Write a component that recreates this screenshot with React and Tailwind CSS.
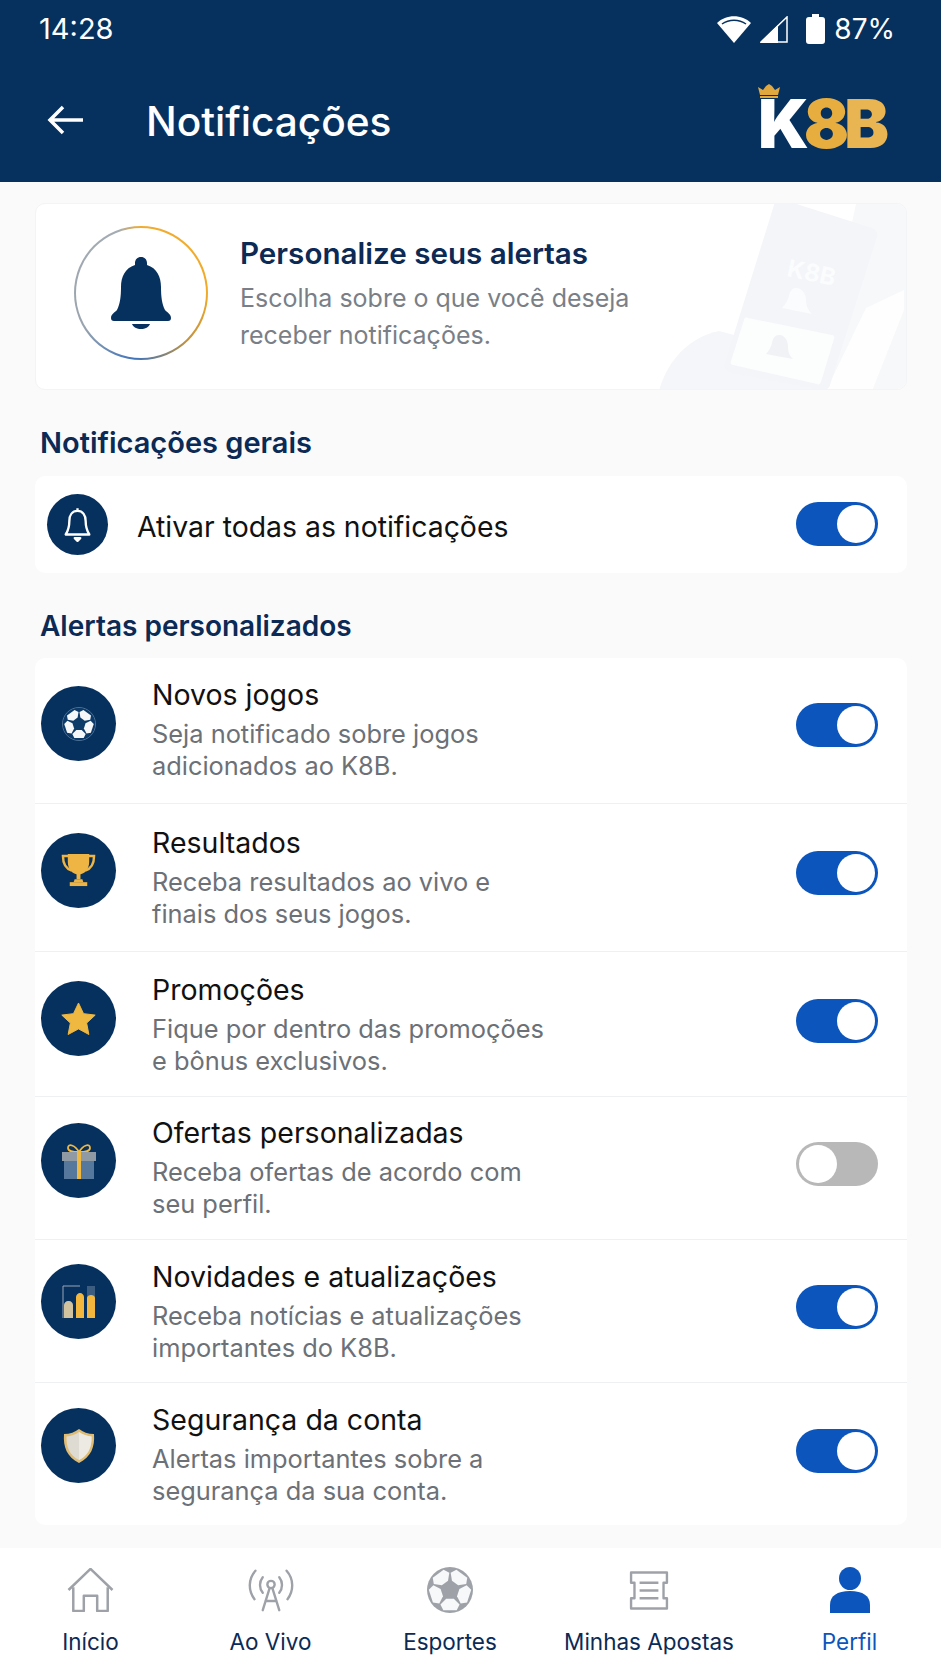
import { useState } from "react";

function Bell({ className, fill = "#06315f" }) {
  return (
    <svg viewBox="0 0 60 72" className={className}>
      <path
        fill={fill}
        d="M30 0c-3.600 0-6 2.600-6 6v2C14 11 10 20 10 30c0 10-1 17-4 23-1.500 2-6 4-6 8 0 2 1 3 3 3h54c2 0 3-1 3-3 0-4-4.500-6-6-8-3-6-4-13-4-23 0-10-4-19-14-22V6c0-3.400-2.400-6-6-6z"
      />
      <path fill={fill} d="M21 67h18c-1 3-5 5-9 5s-8-2-9-5z" />
    </svg>
  );
}

function BellOutline() {
  return (
    <svg viewBox="0 0 32 40" className="w-[29px] h-[37px]" fill="none" stroke="#fff" strokeWidth="2.600" strokeLinejoin="round">
      <path d="M16 2v3M16 5C10 5 7 10 7 16c0 6-1 10-4 15h26c-3-5-4-9-4-15 0-6-3-11-9-11z" />
      <path d="M13 35h6l-3 3z" fill="#fff" />
    </svg>
  );
}

function Ball({ base, patch, className }) {
  const angles = [36, 108, 180, 252, 324];
  return (
    <svg viewBox="0 0 48 48" className={className}>
      <circle cx="24" cy="24" r="24" fill={base} />
      {angles.map((a) => (
        <polygon key={a} points="17,3 31,3 34,9 28,15 20,15 14,9" fill={patch} transform={`rotate(${a} 24 24)`} />
      ))}
    </svg>
  );
}

function SoccerIcon() {
  return (
    <div className="w-[34px] h-[34px] rounded-full border border-[#4d6f94] bg-[#0c3a69] overflow-hidden">
      <Ball base="#0c3a69" patch="#f6f7f9" className="w-full h-full" />
    </div>
  );
}

function Trophy() {
  return (
    <svg viewBox="0 0 36 36" className="w-[35px] h-[35px]">
      <path d="M8 3H2c0 8 3 13 9 15M28 3h6c0 8-3 13-9 15" fill="none" stroke="#eeb544" strokeWidth="2.500" />
      <path d="M7 1h22v8c0 8-5 13-11 13S7 17 7 9z" fill="#eeb544" />
      <path d="M16 21h4v6h-4z" fill="#eeb544" />
      <path d="M14 27h8l1 3H13z" fill="#eeb544" />
      <path d="M9 30h18v4H9z" fill="#eeb544" />
    </svg>
  );
}

function Star() {
  return (
    <svg viewBox="0 0 36 34" className="w-[35px] h-[33px]">
      <path
        d="M18 1l5.200 11 12 1.500-8.800 8.200 2.300 11.800L18 27.700 7.300 33.500l2.300-11.800L.8 13.500l12-1.500z"
        fill="#efb840"
        stroke="#efb840"
        strokeLinejoin="round"
      />
    </svg>
  );
}

function Gift() {
  return (
    <svg viewBox="0 0 34 36" className="w-[34px] h-[36px]">
      <path d="M17 9C13 2 6 0 6 5c0 4 6 4 11 4zM17 9c4-7 11-9 11-4 0 4-6 4-11 4z" fill="none" stroke="#efb840" strokeWidth="1.800" />
      <path d="M2 12h30v16H2z" fill="#5a7ba0" />
      <path d="M0 9h34v9H0z" fill="#8f9aa4" />
      <path d="M2 18h13v18H2zM19 18h13v18H19z" fill="#56789d" />
      <path d="M15 9h4v27h-4z" fill="#efb840" />
    </svg>
  );
}

function Chart() {
  return (
    <svg viewBox="0 0 34 34" className="w-[34px] h-[34px]">
      <path d="M1 33V1h17" fill="none" stroke="#9aa6b4" strokeWidth="1" />
      <path d="M25 1h8v12h-8z" fill="#3c5c80" />
      <path d="M2 33V20c0-2 2-4 4-4h1c2 0 4 2 4 4v13z" fill="#d2c3a0" />
      <path d="M14 33V12c0-2 2-4 4-4s4 2 4 4v21z" fill="#f3b73e" />
      <path d="M25 33V13c0-2 2-3 4-3s4 1 4 3v20z" fill="#f3b73e" />
    </svg>
  );
}

function Shield() {
  return (
    <svg viewBox="0 0 32 36" className="w-[32px] h-[36px]">
      <path d="M16 1c4 3 9 5 15 5 1 13-3 23-15 29C4 29 0 19 1 6c6 0 11-2 15-5z" fill="#e0bc72" />
      <path d="M16 4c3.500 2.500 8 4 12.500 4.500C29 19 25 28 16 32 7 28 3 19 3.500 8.500 8 8 12.500 6.500 16 4z" fill="#dedbd2" />
      <path d="M16 4c3.500 2.500 8 4 12.500 4.500C29 19 25 28 16 32z" fill="#eceae3" />
    </svg>
  );
}

function Circle({ size, children }) {
  return (
    <div className={`${size} rounded-full bg-[#06315f] flex items-center justify-center shrink-0`}>{children}</div>
  );
}

function Toggle({ initial = true }) {
  const [on, setOn] = useState(initial);
  return (
    <button
      onClick={() => setOn(!on)}
      className={`w-[82px] h-[44px] rounded-full p-[3px] flex shrink-0 ${on ? "bg-[#0b55bd] justify-end" : "bg-[#b8b8b8] justify-start"}`}
    >
      <span className="w-[38px] h-[38px] rounded-full bg-white block" />
    </button>
  );
}

const rows = [
  {
    title: "Novos jogos",
    desc: ["Seja notificado sobre jogos", "adicionados ao K8B."],
    icon: <SoccerIcon />,
    row: "h-[146px]",
    iconPos: "mt-[28px]",
    textPos: "mt-[19px]",
    togglePos: "mt-[45px]",
  },
  {
    title: "Resultados",
    desc: ["Receba resultados ao vivo e", "finais dos seus jogos."],
    icon: <Trophy />,
    row: "h-[148px]",
    iconPos: "mt-[29px]",
    textPos: "mt-[21px]",
    togglePos: "mt-[47px]",
  },
  {
    title: "Promoções",
    desc: ["Fique por dentro das promoções", "e bônus exclusivos."],
    icon: <Star />,
    row: "h-[145px]",
    iconPos: "mt-[29px]",
    textPos: "mt-[20px]",
    togglePos: "mt-[47px]",
  },
  {
    title: "Ofertas personalizadas",
    desc: ["Receba ofertas de acordo com", "seu perfil."],
    icon: <Gift />,
    off: true,
    row: "h-[143px]",
    iconPos: "mt-[26px]",
    textPos: "mt-[18px]",
    togglePos: "mt-[45px]",
  },
  {
    title: "Novidades e atualizações",
    desc: ["Receba notícias e atualizações", "importantes do K8B."],
    icon: <Chart />,
    row: "h-[143px]",
    iconPos: "mt-[24px]",
    textPos: "mt-[19px]",
    togglePos: "mt-[45px]",
  },
  {
    title: "Segurança da conta",
    desc: ["Alertas importantes sobre a", "segurança da sua conta."],
    icon: <Shield />,
    row: "h-[142px]",
    iconPos: "mt-[25px]",
    textPos: "mt-[19px]",
    togglePos: "mt-[46px]",
  },
];

function HeroArt() {
  return (
    <svg viewBox="0 0 280 187" className="absolute right-0 top-0 w-[280px] h-[187px]">
      <path d="M230 0h50v187h-90z" fill="#f7f8fa" />
      <path d="M33 187c8-30 30-54 60-60l60 16 60 44z" fill="#f5f6f9" />
      <path d="M240 104l38-18v20l-32 81h-46z" fill="#fefefe" />
      <path
        d="M158 -4l88 28c4 1 6 5 5 9l-47 148c-1 4-5 6-9 5l-90-17c-5-1-8-5-6-10L148 1c1-4 6-6 10-5z"
        fill="#f4f5f9"
      />
      <path d="M122 114l84 17c2 0 3 2 2 4l-13 43c-1 2-2 3-4 2l-84-19c-2 0-3-2-2-4l13-41c0-2 2-3 4-2z" fill="#fcfdfd" />
      <text x="160" y="72" fontSize="24" fontWeight="700" fill="#fbfcfd" transform="rotate(12 160 72)">
        K8B
      </text>
      <path d="M170 84c6 0 10 6 10 12 0 8 4 12 6 14l-30-6c3-3 6-8 7-12 1-5 3-8 7-8z" fill="#fbfcfd" />
      <path d="M153 131c6 0 9 6 9 12 0 7 3 10 5 12l-27-5c3-3 5-7 6-11 1-5 3-8 7-8z" fill="#f0f2f6" />
    </svg>
  );
}

function Home() {
  return (
    <svg viewBox="0 0 48 46" className="w-[47px] h-[44px]" fill="none" stroke="#9ea2a8" strokeWidth="2.600" strokeLinejoin="round">
      <path d="M1 23L24 1l23 22" />
      <path d="M6 20v25h11V29h14v16h11V20" />
    </svg>
  );
}

function Tower() {
  return (
    <svg viewBox="0 0 48 48" className="w-[48px] h-[44px]" fill="none" stroke="#9ea2a8" strokeWidth="2.600" strokeLinecap="round">
      <circle cx="24" cy="18" r="4" />
      <path d="M22.500 22L15 46M25.500 22L33 46M18 36h12" />
      <path d="M15 10c-4 5-4 12 0 17M33 10c4 5 4 12 0 17" />
      <path d="M7 3c-8 9-8 22-1 31M41 3c8 9 8 22 1 31" />
    </svg>
  );
}

function Scroll() {
  return (
    <svg viewBox="0 0 48 48" className="w-[42px] h-[41px]" fill="none" stroke="#9ea2a8" strokeWidth="2.800" strokeLinejoin="round">
      <path d="M3 3h42v12h-4v18h4v12H3V33h4V15H3z" />
      <path d="M13 15h22M13 24h22M13 33h22" />
    </svg>
  );
}

function Person() {
  return (
    <svg viewBox="0 0 40 46" className="w-[40px] h-[46px]" fill="#0b55bd">
      <ellipse cx="20" cy="11.500" rx="11" ry="11.500" />
      <path d="M0 46V38c0-9 7-14 20-14s20 5 20 14v8z" />
    </svg>
  );
}

const tabs = [
  { label: "Início", icon: <Home /> },
  { label: "Ao Vivo", icon: <Tower /> },
  { label: "Esportes", icon: <Ball base="#9ea2a8" patch="#f7f8f9" className="w-[46px] h-[46px]" /> },
  { label: "Minhas Apostas", icon: <Scroll /> },
  { label: "Perfil", icon: <Person />, active: true },
];

export default function App() {
  return (
    <div className="w-[941px] h-[1672px] bg-[#fafafb] flex flex-col overflow-hidden font-['Inter','Noto_Sans',sans-serif]">
      <header className="h-[182px] bg-[#06315f] text-white shrink-0">
        <div className="h-[58px] pl-[39px] pr-[46px] flex items-center justify-between">
          <span className="text-[29px]">14:28</span>
          <div className="flex items-center">
            <svg viewBox="0 0 34 27" className="w-[34px] h-[27px]">
              <path d="M17 27L0 7c9-9 25-9 34 0z" fill="#fff" />
              <path d="M5 8c7-5 17-5 24 0" fill="none" stroke="#06315f" strokeWidth="1.500" />
            </svg>
            <svg viewBox="0 0 28 27" className="w-[28px] h-[27px] ml-[9px]">
              <path d="M27 1v25H1z" fill="none" stroke="#fff" strokeWidth="1.500" />
              <path d="M18 9v18H0z" fill="#fff" />
            </svg>
            <svg viewBox="0 0 19 30" className="w-[19px] h-[30px] ml-[18px]">
              <path d="M6 0h7v3h3c2 0 3 1 3 3v21c0 2-1 3-3 3H3c-2 0-3-1-3-3V6c0-2 1-3 3-3h3z" fill="#fff" />
            </svg>
            <span className="text-[28px] ml-[9px]">87%</span>
          </div>
        </div>
        <div className="h-[124px] pl-[47px] pr-[57px] flex items-center">
          <svg viewBox="0 0 36 30" className="w-[36px] h-[30px] shrink-0" fill="none" stroke="#fff" strokeWidth="3.500">
            <path d="M36 15H3M16 2L3 15l13 13" />
          </svg>
          <h1 className="ml-[63px] text-[40.600px] font-medium leading-none mt-[4px]">Notificações</h1>
          <div className="ml-auto relative mt-[7px]">
            <svg viewBox="0 0 22 14" className="absolute left-0 -top-[15px] w-[22px] h-[14px]" fill="#e0a83f">
              <path d="M2 11L0 3l5 3 3-4 3-2 3 2 3 4 5-3-2 8z" />
              <path d="M2 12h18v2H2z" />
            </svg>
            <div className="text-[67px] leading-[50px] font-black tracking-[-5px] flex">
              <span className="text-white">K</span>
              <span className="text-[#e7ad3f]">8</span>
              <span className="text-[#e9b452]">B</span>
            </div>
          </div>
        </div>
      </header>

      <main className="flex-1 pt-[21px] pl-[35px] pr-[34px]">
        <section className="relative h-[187px] bg-white rounded-[10px] overflow-hidden border border-[#f3f4f5] flex items-center pl-[38px]">
          <HeroArt />
          <div className="w-[134px] h-[134px] mb-[7px] rounded-full p-[2px] bg-[conic-gradient(#f2ab2e_0deg,#f0ab2b_90deg,#c4933c_135deg,#3f74bb_185deg,#9aa4ae_240deg,#a5acb3_340deg,#f2ab2e_360deg)] shrink-0">
            <div className="w-full h-full rounded-full bg-white flex items-center justify-center">
              <Bell className="w-[60px] h-[72px]" />
            </div>
          </div>
          <div className="relative ml-[32px] -mt-[5px]">
            <h2 className="text-[29.600px] font-semibold text-[#0b2a55] leading-[36px]">Personalize seus alertas</h2>
            <p className="text-[25px] text-[#7a7f87] leading-[37px] mt-[9px]">
              Escolha sobre o que você deseja
              <br />
              receber notificações.
            </p>
          </div>
        </section>

        <h3 className="mt-[36px] ml-[5px] text-[29px] font-semibold text-[#0b2a55] leading-[34px]">Notificações gerais</h3>
        <section className="mt-[16px] h-[97px] bg-white rounded-[10px] flex items-center pl-[12px] pr-[29px]">
          <Circle size="w-[61px] h-[61px]">
            <BellOutline />
          </Circle>
          <span className="ml-[29px] text-[28.400px] text-[#111] mt-[6px]">Ativar todas as notificações</span>
          <div className="ml-auto -mt-[2px]">
            <Toggle />
          </div>
        </section>

        <h3 className="mt-[36px] ml-[5px] text-[28px] font-semibold text-[#0b2a55] leading-[34px]">Alertas personalizados</h3>
        <section className="mt-[15px] bg-white rounded-[10px] divide-y divide-[#eef0f2]">
          {rows.map((r) => (
            <div key={r.title} className={`${r.row} flex items-start pl-[6px] pr-[29px]`}>
              <div className={r.iconPos}>
                <Circle size="w-[75px] h-[75px]">{r.icon}</Circle>
              </div>
              <div className={`${r.textPos} ml-[36px]`}>
                <div className="text-[28.500px] text-[#111] leading-[36px] mb-[5px]">{r.title}</div>
                {r.desc.map((d) => (
                  <div key={d} className="text-[25.400px] text-[#6c7077] leading-[32px]">
                    {d}
                  </div>
                ))}
              </div>
              <div className={`${r.togglePos} ml-auto`}>
                <Toggle initial={!r.off} />
              </div>
            </div>
          ))}
        </section>
      </main>

      <nav className="h-[124px] bg-white grid grid-cols-[181px_179px_180px_218px_183px] shrink-0">
        {tabs.map((t) => (
          <div key={t.label} className="flex flex-col items-center">
            <div className="h-[50px] mt-[17px] flex items-center justify-center">{t.icon}</div>
            <span className={`mt-[12px] text-[22.500px] leading-[30px] ${t.active ? "text-[#0b55bd]" : "text-[#0b2a55]"}`}>{t.label}</span>
          </div>
        ))}
      </nav>
    </div>
  );
}
